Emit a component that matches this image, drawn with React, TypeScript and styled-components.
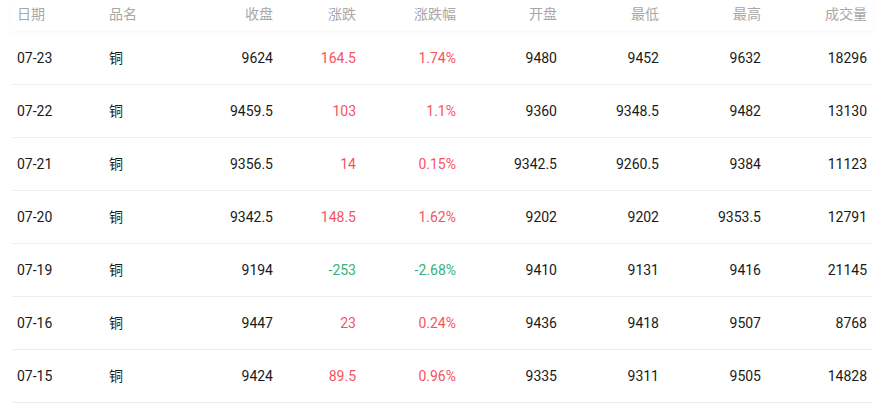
import React from "react";
import styled, { createGlobalStyle } from "styled-components";

const Global = createGlobalStyle`
  body {
    margin: 0;
    background: #fff;
    font-family: Roboto, "Noto Sans CJK SC", sans-serif;
  }
`;

const Wrap = styled.div`
  padding: 0 9px 0 12px;
`;

const cols = "92px 82px 92px 83px 100px 101px 102px 102px 106px";

const HeaderRow = styled.div`
  display: grid;
  grid-template-columns: ${cols};
  height: 31px;
  align-items: center;
  box-shadow: 0 2px 6px rgba(0, 0, 0, 0.035);
  margin-bottom: 1px;
`;

const Row = styled.div`
  display: grid;
  grid-template-columns: ${cols};
  height: 52px;
  align-items: center;
  border-bottom: 1px solid #ebedf2;
`;

const HeadCell = styled.div<{ $right?: boolean }>`
  padding: 0 5px;
  font-size: 14px;
  color: #a7a7a7;
  text-align: ${(p) => (p.$right ? "right" : "left")};
  line-height: 18px;
  margin-top: -4px;
`;

const Cell = styled.div<{ $right?: boolean; $tone?: "up" | "down" }>`
  padding: 0 5px;
  font-size: 14px;
  line-height: 18px;
  text-align: ${(p) => (p.$right ? "right" : "left")};
  color: ${(p) =>
    p.$tone === "up" ? "#f7535f" : p.$tone === "down" ? "#35b27b" : "#1a1a1a"};
`;

const heads = ["日期", "品名", "收盘", "涨跌", "涨跌幅", "开盘", "最低", "最高", "成交量"];

const data = [
  ["07-23", "铜", "9624", "164.5", "1.74%", "9480", "9452", "9632", "18296"],
  ["07-22", "铜", "9459.5", "103", "1.1%", "9360", "9348.5", "9482", "13130"],
  ["07-21", "铜", "9356.5", "14", "0.15%", "9342.5", "9260.5", "9384", "11123"],
  ["07-20", "铜", "9342.5", "148.5", "1.62%", "9202", "9202", "9353.5", "12791"],
  ["07-19", "铜", "9194", "-253", "-2.68%", "9410", "9131", "9416", "21145"],
  ["07-16", "铜", "9447", "23", "0.24%", "9436", "9418", "9507", "8768"],
  ["07-15", "铜", "9424", "89.5", "0.96%", "9335", "9311", "9505", "14828"],
];

export default function App() {
  return (
    <>
      <Global />
      <Wrap>
        <HeaderRow>
          {heads.map((h, i) => (
            <HeadCell key={h} $right={i >= 2}>
              {h}
            </HeadCell>
          ))}
        </HeaderRow>
        {data.map((r) => {
          const tone = r[3].startsWith("-") ? "down" : "up";
          return (
            <Row key={r[0]}>
              {r.map((v, i) => (
                <Cell key={i} $right={i >= 2} $tone={i === 3 || i === 4 ? tone : undefined}>
                  {v}
                </Cell>
              ))}
            </Row>
          );
        })}
      </Wrap>
    </>
  );
}
